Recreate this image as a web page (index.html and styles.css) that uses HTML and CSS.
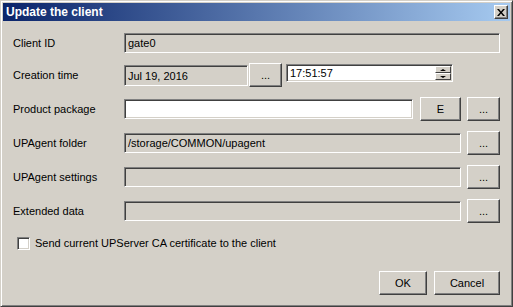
FILE: index.html
```html
<!DOCTYPE html>
<html lang="en">
<head>
    <meta charset="UTF-8">
    <title>Update the client</title>
    <link rel="stylesheet" href="styles.css">
</head>
<body>
    <div class="window">
        <div class="titlebar">
            <span class="title">Update the client</span>
            <span class="close">
                <svg width="8" height="7" viewBox="0 0 8 7"><path d="M0 0h2l2 2.5 2-2.5h2l-3 3.5 3 3.5h-2l-2-2.5-2 2.5h-2l3-3.5z" fill="#000"/></svg>
            </span>
        </div>

        <div class="content">
            <div class="row short">
                <span class="label">Client ID</span>
                <div class="field disabled grow">gate0</div>
            </div>

            <div class="row">
                <span class="label">Creation time</span>
                <div class="field disabled date">Jul 19, 2016</div>
                <span class="btn dots tight">...</span>
                <div class="field time">
                    17:51:57
                    <span class="spin">
                        <span class="spin-btn"><i class="arrow up"></i></span>
                        <span class="spin-btn"><i class="arrow down"></i></span>
                    </span>
                </div>
            </div>

            <div class="row">
                <span class="label">Product package</span>
                <div class="field grow"></div>
                <span class="btn e-btn">E</span>
                <span class="btn dots">...</span>
            </div>

            <div class="row">
                <span class="label">UPAgent folder</span>
                <div class="field disabled grow">/storage/COMMON/upagent</div>
                <span class="btn dots">...</span>
            </div>

            <div class="row">
                <span class="label">UPAgent settings</span>
                <div class="field disabled grow"></div>
                <span class="btn dots">...</span>
            </div>

            <div class="row">
                <span class="label">Extended data</span>
                <div class="field disabled grow"></div>
                <span class="btn dots">...</span>
            </div>

            <div class="check-row">
                <span class="checkbox"></span>
                <span>Send current UPServer CA certificate to the client</span>
            </div>

            <div class="actions">
                <span class="btn action ok">OK</span>
                <span class="btn action">Cancel</span>
            </div>
        </div>
    </div>
</body>
</html>
```

FILE: styles.css
```css
* {
    box-sizing: border-box;
}

body {
    margin: 0;
    font-family: "Liberation Sans", Arial, sans-serif;
    font-size: 11px;
    color: #000;
    background: #d4d0c8;
}

.window {
    width: 513px;
    height: 307px;
    padding: 2px;
    background: #d4d0c8;
    border: 1px solid;
    border-color: #d4d0c8 #404040 #404040 #d4d0c8;
    box-shadow: inset 1px 1px #fff, inset -1px -1px #808080;
    display: flex;
    flex-direction: column;
}

.titlebar {
    height: 18px;
    background: linear-gradient(to right, #0a246a, #a6caf0);
    display: flex;
    align-items: center;
    justify-content: space-between;
    padding: 0 2px 0 3px;
}

.title {
    color: #fff;
    font-weight: bold;
    font-size: 12px;
}

.close {
    width: 14px;
    height: 14px;
    background: #d4d0c8;
    border: 1px solid;
    border-color: #fff #404040 #404040 #fff;
    box-shadow: inset -1px -1px #808080;
    display: flex;
    align-items: center;
    justify-content: center;
    padding-right: 1px;
}

.content {
    flex: 1;
    padding: 12px 10px 9px 10px;
    display: flex;
    flex-direction: column;
}

.row {
    display: flex;
    align-items: center;
    height: 24px;
    margin-bottom: 10px;
}

.row.short {
    height: 20px;
}

.label {
    width: 111px;
    flex-shrink: 0;
}

.field {
    height: 20px;
    background: #fff;
    border: 1px solid;
    border-color: #808080 #fff #fff #808080;
    box-shadow: inset 1px 1px #404040, inset -1px -1px #d4d0c8;
    padding: 0 3px;
    display: flex;
    align-items: center;
    white-space: nowrap;
}

.field.disabled {
    background: #d4d0c8;
}

.grow {
    flex: 1;
}

.date {
    width: 124px;
    height: 21px;
    margin-top: 1px;
}

.time {
    width: 167px;
    height: 18px;
    margin-left: 4px;
    align-self: flex-start;
    margin-top: 1px;
    position: relative;
}

.spin {
    position: absolute;
    right: 1px;
    top: 1px;
    display: flex;
    flex-direction: column;
}

.spin-btn {
    width: 16px;
    height: 7px;
    background: #d4d0c8;
    border: 1px solid;
    border-color: #fff #404040 #404040 #fff;
    display: flex;
    align-items: center;
    justify-content: center;
}

.arrow {
    width: 0;
    height: 0;
    border-left: 3px solid transparent;
    border-right: 3px solid transparent;
}

.arrow.up {
    border-bottom: 2px solid #000;
}

.arrow.down {
    border-top: 2px solid #000;
}

.btn {
    height: 24px;
    background: #d4d0c8;
    border: 1px solid;
    border-color: #fff #404040 #404040 #fff;
    box-shadow: inset -1px -1px #808080;
    display: flex;
    align-items: center;
    justify-content: center;
    flex-shrink: 0;
}

.dots {
    width: 33px;
    margin-left: 6px;
    padding-bottom: 1px;
}

.dots.tight {
    margin-left: 1px;
}

.e-btn {
    width: 41px;
    margin-left: 7px;
}

.check-row {
    display: flex;
    align-items: center;
    gap: 5px;
    height: 16px;
    padding-left: 4px;
    margin-top: 2px;
}

.checkbox {
    width: 13px;
    height: 13px;
    background: #fff;
    border: 1px solid;
    border-color: #808080 #fff #fff #808080;
    box-shadow: inset 1px 1px #404040, inset -1px -1px #d4d0c8;
}

.actions {
    margin-top: auto;
    display: flex;
    justify-content: flex-end;
    gap: 7px;
}

.action {
    width: 48px;
}

.action:last-child {
    width: 66px;
}
```
